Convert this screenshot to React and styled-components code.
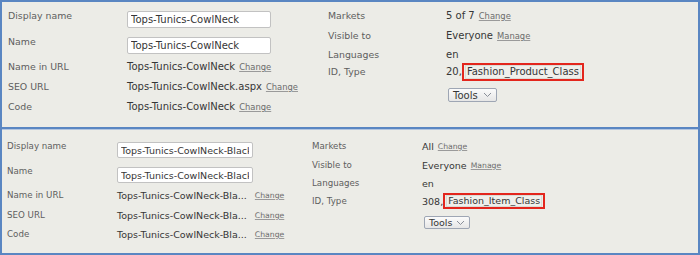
import styled, { createGlobalStyle } from "styled-components"

const GlobalStyle = createGlobalStyle`
    html, body {
        margin: 0;
        padding: 0;
        background: #ecece7;
    }
`

const sizes = {
    top: {
        pad: "7px 0 0 6px",
        height: "125px",
        label: "9.4px",
        value: "10px",
        link: "8.4px",
        line: "14px",
        boxLine: "14px",
        leftCol: "119px",
        leftW: "320px",
        rightCol: "118px",
        inputW: "144px",
        inputH: "17px",
        leftRows: "26px 25px 20px 20px 20px",
        rightRows: "20px 19px 15px 25px 14px",
        gap: "4px",
        toolsW: "49px",
        toolsH: "14px",
    },
    bottom: {
        pad: "10px 0 0 5px",
        height: "auto",
        label: "8.7px",
        value: "9.5px",
        link: "7.7px",
        line: "13px",
        boxLine: "12px",
        leftCol: "110px",
        leftW: "305px",
        rightCol: "110px",
        inputW: "136px",
        inputH: "16px",
        leftRows: "25px 24px 20px 19px 19px",
        rightRows: "19px 18px 16px 23px 13px",
        gap: "8px",
        toolsW: "46px",
        toolsH: "13px",
    },
}

const Chevron = () => (
    <svg width="9" height="6" viewBox="0 0 9 6">
        <polyline points="1,1 4.5,4.5 8,1" fill="none" stroke="#8a8f99" strokeWidth="1" />
    </svg>
)

const Panel = ({ size, left, right }) => {
    const s = sizes[size]
    return (
        <PanelStyled $s={s}>
            <Section $cols={`${s.leftCol} 1fr`} $rows={s.leftRows} style={{ width: s.leftW }}>
                {left.map((row, i) => (
                    <Row key={i}>
                        <Label $s={s}>{row.label}</Label>
                        {row.input ? (
                            <Input $s={s} readOnly value={row.input} />
                        ) : (
                            <Value $s={s}>
                                {row.value}
                                <Link $s={s} $gap={s.gap}>Change</Link>
                            </Value>
                        )}
                    </Row>
                ))}
            </Section>
            <Section $cols={`${s.rightCol} 1fr`} $rows={s.rightRows}>
                {right.map((row, i) => (
                    <Row key={i}>
                        <Label $s={s} $boxed={!!row.type}>{row.label}</Label>
                        <Value $s={s}>
                            {row.value}
                            {row.type && <TypeBox $s={s}><span>{row.type}</span></TypeBox>}
                            {row.link && <Link $s={s} $gap="4px">{row.link}</Link>}
                        </Value>
                    </Row>
                ))}
                <Row>
                    <span />
                    <ToolsButton $s={s}>
                        Tools <Chevron />
                    </ToolsButton>
                </Row>
            </Section>
        </PanelStyled>
    )
}

export default function App() {
    return (
        <>
            <GlobalStyle />
            <Frame>
                <Panel
                    size="top"
                    left={[
                        { label: "Display name", input: "Tops-Tunics-CowlNeck" },
                        { label: "Name", input: "Tops-Tunics-CowlNeck" },
                        { label: "Name in URL", value: "Tops-Tunics-CowlNeck" },
                        { label: "SEO URL", value: "Tops-Tunics-CowlNeck.aspx" },
                        { label: "Code", value: "Tops-Tunics-CowlNeck" },
                    ]}
                    right={[
                        { label: "Markets", value: "5 of 7", link: "Change" },
                        { label: "Visible to", value: "Everyone", link: "Manage" },
                        { label: "Languages", value: "en" },
                        { label: "ID, Type", value: "20,", type: "Fashion_Product_Class" },
                    ]}
                />
                <Separator />
                <Panel
                    size="bottom"
                    left={[
                        { label: "Display name", input: "Tops-Tunics-CowlNeck-Black" },
                        { label: "Name", input: "Tops-Tunics-CowlNeck-Black" },
                        { label: "Name in URL", value: "Tops-Tunics-CowlNeck-Bla..." },
                        { label: "SEO URL", value: "Tops-Tunics-CowlNeck-Bla..." },
                        { label: "Code", value: "Tops-Tunics-CowlNeck-Bla..." },
                    ]}
                    right={[
                        { label: "Markets", value: "All", link: "Change" },
                        { label: "Visible to", value: "Everyone", link: "Manage" },
                        { label: "Languages", value: "en" },
                        { label: "ID, Type", value: "308,", type: "Fashion_Item_Class" },
                    ]}
                />
            </Frame>
        </>
    )
}

const Frame = styled.div`
    width: 700px;
    height: 255px;
    box-sizing: border-box;
    border: 2px solid #5a86c2;
    background: #ecece7;
    display: flex;
    flex-direction: column;
    font-family: "DejaVu Sans", Verdana, sans-serif;
    overflow: hidden;
`

const PanelStyled = styled.div`
    display: flex;
    padding: ${p => p.$s.pad};
    height: ${p => p.$s.height};
    box-sizing: border-box;
    flex: ${p => (p.$s.height === "auto" ? 1 : "none")};
`

const Section = styled.div`
    display: grid;
    grid-template-columns: ${p => p.$cols};
    grid-template-rows: ${p => p.$rows};
    align-content: start;
`

const Row = styled.div`
    display: contents;

    & > * {
        align-self: start;
    }
`

const Label = styled.span`
    padding-top: ${p => (p.$boxed ? "2px" : "0")};
    font-size: ${p => p.$s.label};
    line-height: ${p => p.$s.line};
    color: #5e5e5e;
    white-space: nowrap;
`

const Value = styled.span`
    display: flex;
    align-items: center;
    font-size: ${p => p.$s.value};
    line-height: ${p => p.$s.line};
    color: #363636;
    white-space: nowrap;
`

const Link = styled.a`
    margin-left: ${p => p.$gap};
    font-size: ${p => p.$s.link};
    color: #6b6b6b;
    text-decoration: underline;
    text-decoration-color: #9a9a9a;
    cursor: pointer;
`

const Input = styled.input`
    margin: 2px 0 0;
    width: ${p => p.$s.inputW};
    height: ${p => p.$s.inputH};
    box-sizing: border-box;
    padding: 0 3px;
    border: 1px solid #c2c2c2;
    border-radius: 2px;
    background: #fff;
    font-family: "DejaVu Sans", Verdana, sans-serif;
    font-size: ${p => p.$s.value};
    color: #363636;
    outline: none;
`

const TypeBox = styled.span`
    display: inline-block;
    border: 2px solid #e3261d;
    padding: 0 1px;

    span {
        display: block;
        padding: 0 2px;
        background: #efefeb;
        box-shadow: inset 0 0 0 1px #dcdcd6;
        line-height: ${p => p.$s.boxLine};
    }
`

const ToolsButton = styled.button`
    margin-left: 2px;
    width: ${p => p.$s.toolsW};
    height: ${p => p.$s.toolsH};
    box-sizing: border-box;
    display: flex;
    align-items: center;
    justify-content: space-between;
    padding: 0 4px;
    border: 1px solid #9ea6b4;
    border-radius: 2px;
    background: linear-gradient(#fbfbfb, #e6e6e6);
    font-family: "DejaVu Sans", Verdana, sans-serif;
    font-size: ${p => p.$s.value};
    color: #363636;
`

const Separator = styled.div`
    height: 3px;
    flex: none;
    border-top: 2px solid #5a86c2;
    background: #b4c6e0;
    box-sizing: border-box;
`
